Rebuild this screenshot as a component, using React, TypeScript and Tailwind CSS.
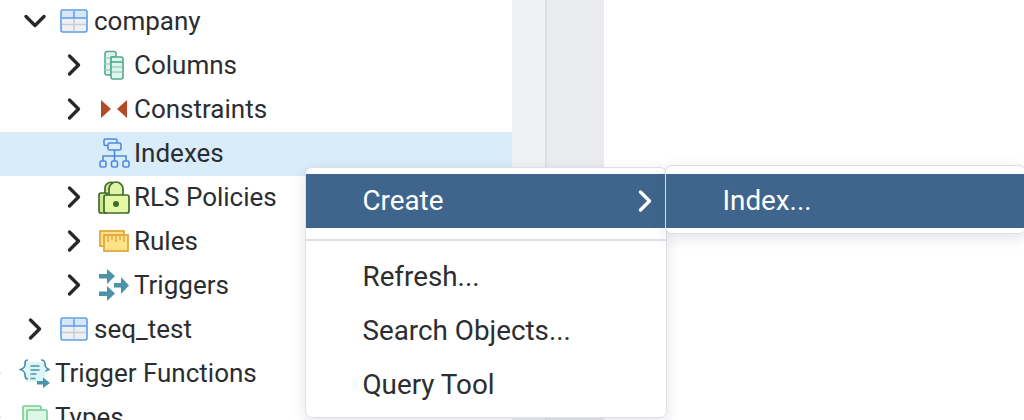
const TableIcon = () => (
  <svg width="28" height="24" viewBox="0 0 28 24" fill="none">
    <rect x="1" y="1" width="26" height="22" rx="2" fill="#eef0f3" />
    <path d="M2 2.500h24V9H2z" fill="#d5e6f8" />
    <path d="M2 15.500h24M14 9v13" stroke="#c9ccd2" strokeWidth="1.500" />
    <path d="M2 9h24M14 2v7" stroke="#5b9fe8" strokeWidth="1.500" />
    <rect x="1" y="1" width="26" height="22" rx="2" stroke="#5b9fe8" strokeWidth="1.600" />
  </svg>
);

const ColumnsIcon = () => (
  <svg width="20" height="30" viewBox="0 0 20 30" fill="none">
    <path d="M1 3.500a2 2 0 0 1 2-2h7a2 2 0 0 1 2 2V7H7v18H3a2 2 0 0 1-2-2z" fill="#dff5ec" stroke="#56a88f" strokeWidth="1.600" />
    <path d="M1 8h6M1 14h6M1 20h6" stroke="#a9cfc2" strokeWidth="1.300" />
    <rect x="7" y="7" width="12" height="22" rx="2" fill="#dcf8ee" stroke="#56a88f" strokeWidth="1.600" />
    <path d="M7 12h12" stroke="#56a88f" strokeWidth="1.600" />
    <path d="M8 17h10M8 22h10" stroke="#a9cfc2" strokeWidth="1.300" />
  </svg>
);

const ConstraintsIcon = () => (
  <svg width="26" height="20" viewBox="0 0 26 20">
    <path d="M0 1l10 9-10 9zM26 1 16 10l10 9z" fill="#b34a28" />
  </svg>
);

const IndexesIcon = () => (
  <svg width="31" height="30" viewBox="0 0 31 30" fill="none" stroke="#4e8bdc" strokeWidth="1.600">
    <rect x="5" y="1" width="13" height="6.500" rx="1.500" fill="#dcebfa" />
    <rect x="9" y="5" width="13" height="7" rx="1.500" fill="#dcebfa" />
    <path d="M15.500 12v11M4 23v-5h23v5" />
    <rect x="1" y="23" width="6" height="6" rx="1.500" />
    <rect x="12.500" y="23" width="6" height="6" rx="1.500" />
    <rect x="24" y="23" width="6" height="6" rx="1.500" />
  </svg>
);

const LockIcon = () => (
  <svg width="32" height="33" viewBox="0 0 32 33" fill="none" stroke="#3f6b2b" strokeWidth="1.700">
    <path d="M7 12V7a6 6 0 0 1 11-3" fill="#cfe88f" />
    <path d="M1 14a2 2 0 0 1 2-2h6v20H3a2 2 0 0 1-2-2z" fill="#cfe88f" />
    <path d="M11 14V8a7 7 0 0 1 14 0v6" fill="#dff5a8" />
    <rect x="6" y="14" width="25" height="18" rx="2" fill="#e3f9a6" />
    <circle cx="18" cy="23" r="3" fill="#3f6b2b" stroke="none" />
  </svg>
);

const RulesIcon = () => (
  <svg width="30" height="22" viewBox="0 0 30 22" fill="none" stroke="#e0a93c" strokeWidth="1.800">
    <rect x="1" y="1" width="24" height="15" fill="#fbe08a" />
    <rect x="5" y="5" width="24" height="16" fill="#fde28a" />
    <path d="M9 5v7M13 5v5M17 5v7M21 5v5M25 5v7" strokeWidth="1.400" />
  </svg>
);

const TriggersIcon = () => (
  <svg width="30" height="32" viewBox="0 0 30 32" fill="#4a93a8">
    <path d="M0 5h8V0l8 7-8 8v-5.500H0z" />
    <path d="M15 14h7V8l8 8.500L22 25v-6.500h-7z" />
    <path d="M0 22.500h8V17l8 7.500L8 32v-5H0z" />
  </svg>
);

const TriggerFunctionsIcon = () => (
  <svg width="31" height="29" viewBox="0 0 31 29" fill="none" stroke="#4a93a8" strokeWidth="1.700">
    <path d="M8 3h15l3 3v15l-3 2H8l-2-3V6z" fill="#dcf5f6" stroke="none" />
    <path d="M9 1c-3 0-3 2-3 4s0 4-4.500 5.500C6 12 6 14 6 16s0 4 3 4M22 1c3 0 4 2 4 4s0 4 4 5.500c-2 .5-3 1-3.500 2" />
    <path d="M11.500 7h9M11.500 11h9M11.500 15h6M11.500 19.500h5" />
    <path d="M18 22h6v-3.500l7 5.500-7 5v-3.500h-6z" fill="#4a93a8" stroke="none" />
  </svg>
);

const TypesIcon = () => (
  <svg width="26" height="24" viewBox="0 0 26 24" fill="#dcf7e4" stroke="#78c998" strokeWidth="1.600">
    <rect x="1" y="1" width="18" height="18" rx="1" />
    <rect x="5" y="5" width="20" height="18" rx="1" />
  </svg>
);

const Chevron = ({ open, color = "#26282b" }: { open?: boolean; color?: string }) => (
  <svg width="24" height="24" viewBox="0 0 24 24" fill="none" stroke={color} strokeWidth="3.400" strokeLinecap="round" strokeLinejoin="round">
    {open ? <path d="M3 7.500l9 9 9-9" /> : <path d="M7.500 3l9 9-9 9" />}
  </svg>
);

type Row = {
  label: string;
  icon: React.ReactNode;
  pad: string;
  iconBox: string;
  open?: boolean;
  leaf?: boolean;
  active?: boolean;
};

const ROWS: Row[] = [
  { label: "company", icon: <TableIcon />, pad: "pl-[23px]", iconBox: "w-[47px] pl-[13px]", open: true },
  { label: "Columns", icon: <ColumnsIcon />, pad: "pl-[62px]", iconBox: "w-[48px] pl-[18px]" },
  { label: "Constraints", icon: <ConstraintsIcon />, pad: "pl-[62px]", iconBox: "w-[48px] pl-[15px]" },
  { label: "Indexes", icon: <IndexesIcon />, pad: "pl-[62px]", iconBox: "w-[48px] pl-[13px]", leaf: true, active: true },
  { label: "RLS Policies", icon: <LockIcon />, pad: "pl-[62px]", iconBox: "w-[48px] pl-[12px]" },
  { label: "Rules", icon: <RulesIcon />, pad: "pl-[62px]", iconBox: "w-[48px] pl-[13px]" },
  { label: "Triggers", icon: <TriggersIcon />, pad: "pl-[62px]", iconBox: "w-[48px] pl-[13px]" },
  { label: "seq_test", icon: <TableIcon />, pad: "pl-[23px]", iconBox: "w-[47px] pl-[13px]" },
  { label: "Trigger Functions", icon: <TriggerFunctionsIcon />, pad: "-ml-[18px]", iconBox: "w-[49px] pl-[13px]" },
  { label: "Types", icon: <TypesIcon />, pad: "-ml-[18px]", iconBox: "w-[49px] pl-[16px]" },
];

function TreeRow({ row }: { row: Row }) {
  return (
    <div className={`flex h-[44px] shrink-0 items-center pb-[2px] text-[#2b2d31] ${row.pad} ${row.active ? "bg-[#d9ecf9]" : ""}`}>
      <span className="flex w-[24px] shrink-0 items-center">{row.leaf ? null : <Chevron open={row.open} />}</span>
      <span className={`flex shrink-0 items-center ${row.iconBox}`}>{row.icon}</span>
      <span>{row.label}</span>
    </div>
  );
}

export default function App() {
  return (
    <div className="relative flex h-[420px] w-[1024px] overflow-hidden bg-white font-['Roboto',sans-serif] text-[26px] leading-none">
      <div className="flex w-[512px] shrink-0 flex-col">
        {ROWS.map((row) => (
          <TreeRow key={row.label} row={row} />
        ))}
      </div>
      <div className="w-[33px] shrink-0 bg-[#f0f1f3]" />
      <div className="w-[59px] shrink-0 border-l-2 border-[#dfe0e5] bg-[#ebecf0]" />

      <div className="absolute left-[304.500px] top-[167px] w-[362px] rounded-[7px] border-[1.500px] border-[#dfe0e6] bg-white pt-[5.500px] pb-[6.500px] text-[27.800px] shadow-[0_4px_14px_rgba(60,64,90,0.14)]">
        <div className="flex h-[54px] items-center justify-between bg-[#3f658c] pl-[57px] pr-[9px] text-white">
          <span>Create</span>
          <Chevron color="#ffffff" />
        </div>
        <div className="mt-[11px] mb-[8px] h-[2px] bg-[#dfe0e6]" />
        {["Refresh...", "Search Objects...", "Query Tool"].map((item) => (
          <div key={item} className="flex h-[54px] items-center pl-[57px] pt-[2px] text-[#2b2d31]">
            {item}
          </div>
        ))}
      </div>

      <div className="absolute left-[664.500px] top-[165px] w-[361px] rounded-[7px] border-[1.500px] border-[#dfe0e6] bg-white pt-[7.500px] pb-[5.500px] text-[27.800px] shadow-[0_4px_14px_rgba(60,64,90,0.14)]">
        <div className="flex h-[54px] items-center bg-[#3f658c] pl-[57px] text-white">Index...</div>
      </div>
    </div>
  );
}
